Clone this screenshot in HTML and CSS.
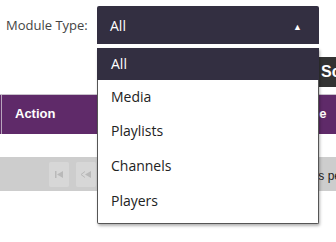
FILE: index.html
```html
<!DOCTYPE html>
<html lang="en">
<head>
    <meta charset="UTF-8">
    <meta name="viewport" content="width=device-width, initial-scale=1.0">
    <title>Modules</title>
    <link rel="stylesheet" href="styles.css">
</head>
<body>

    <div class="page">
        <!-- Filter row -->
        <div class="filter-row">
            <label class="filter-label">Module Type:</label>
            <div class="select-wrap">
                <div class="select-box">
                    <span>All</span>
                    <span class="caret">&#9650;</span>
                </div>

                <!-- Open dropdown -->
                <ul class="dropdown">
                    <li class="active">All</li>
                    <li>Media</li>
                    <li>Playlists</li>
                    <li>Channels</li>
                    <li>Players</li>
                </ul>
            </div>
        </div>

        <div class="search-row">
            <button class="search-btn">Scan</button>
        </div>

        <!-- Table header -->
        <div class="table-head">
            <div class="th th-action">Action</div>
            <div class="th th-type">Module Type</div>
        </div>

        <!-- Pager -->
        <div class="pager">
            <span class="pg-btn">
                <svg width="9" height="7" viewBox="0 0 9 7"><rect x="0" y="0" width="1.5" height="7" fill="#b9b9b9"/><path d="M2 3.5 L8 0 V7 Z" fill="#b9b9b9"/></svg>
            </span>
            <span class="pg-btn">
                <svg width="11" height="7" viewBox="0 0 11 7"><path d="M4 0.5 L0 3.5 L4 6.5" fill="none" stroke="#b9b9b9" stroke-width="1"/><path d="M4 3.5 L10 0 V7 Z" fill="#b9b9b9"/></svg>
            </span>
            <span class="pg-text">10 items per page</span>
        </div>
    </div>

</body>
</html>
```

FILE: styles.css
```css
/* General */
body {
    margin: 0;
    background: #fff;
    font-family: "Open Sans", "Liberation Sans", sans-serif;
    overflow: hidden;
}

.page {
    width: 336px;
    height: 242px;
    overflow: hidden;
    position: relative;
}

/* Filter row */
.filter-row {
    display: flex;
    align-items: flex-start;
    padding-top: 6px;
    height: 38px;
}

.filter-label {
    width: 91px;
    flex-shrink: 0;
    padding-left: 6px;
    margin-top: 12px;
    font-size: 13px;
    line-height: 14px;
    color: #444;
}

.select-wrap {
    position: relative;
    width: 222px;
    flex-shrink: 0;
}

.select-box {
    height: 38px;
    background: #332f41;
    border-radius: 2px 2px 0 0;
    color: #fff;
    font-size: 14px;
    display: flex;
    align-items: center;
    justify-content: space-between;
    padding: 0 17px 0 13px;
    box-sizing: border-box;
}

.caret {
    font-size: 9px;
    margin-top: 2px;
}

/* Dropdown */
.dropdown {
    position: absolute;
    top: 42px;
    left: 0;
    z-index: 10;
    width: 222px;
    margin: 0;
    padding: 0 0 5px;
    list-style: none;
    background: #fff;
    border: 1px solid #555;
    border-top: none;
    box-sizing: border-box;
    box-shadow: 1px 2px 3px rgba(0, 0, 0, 0.3);
    border-radius: 0 0 2px 2px;
}

.dropdown li {
    height: 34px;
    line-height: 34px;
    padding-left: 13px;
    font-size: 14px;
    color: #222;
}

.dropdown li.active {
    height: 32px;
    line-height: 32px;
    background: #332f41;
    color: #fff;
    margin: 0 -1px;
    padding-left: 14px;
}

.dropdown li:nth-child(n+4) {
    height: 35px;
    line-height: 35px;
}

/* Search button */
.search-row {
    padding: 13px 0 0 318px;
    white-space: nowrap;
}

.search-btn {
    height: 30px;
    padding: 0 0 0 3px;
    border: none;
    background: #333;
    color: #fff;
    font-family: "Liberation Sans", Arial, sans-serif;
    font-size: 16px;
    font-weight: bold;
    text-align: left;
    width: 80px;
}

/* Table header */
.table-head {
    margin-top: 7px;
    height: 40px;
    display: flex;
    background: #5f2a69;
    border-top: 1px solid #c9c2cc;
    box-sizing: border-box;
    white-space: nowrap;
}

.th {
    flex-shrink: 0;
    color: #fff;
    font-family: "Liberation Sans", Arial, sans-serif;
    font-weight: bold;
    font-size: 13px;
    line-height: 38px;
}

.th-action {
    width: 300px;
    padding-left: 13px;
    border-left: 1px solid #b9a6bd;
    margin-left: 1px;
}

.th-type {
    margin-left: -67px;
}

/* Pager */
.pager {
    margin-top: 23px;
    height: 34px;
    background: #cdcdcd;
    display: flex;
    align-items: center;
    padding-left: 49px;
    gap: 7px;
    white-space: nowrap;
}

.pg-btn {
    flex-shrink: 0;
    width: 20px;
    height: 25px;
    background: #d7d7d7;
    border-radius: 2px;
    display: flex;
    align-items: center;
    justify-content: center;
}

.pg-text {
    flex-shrink: 0;
    margin-left: 176px;
    margin-top: 4px;
    font-family: "Liberation Sans", Arial, sans-serif;
    font-size: 12px;
    color: #222;
}
```
